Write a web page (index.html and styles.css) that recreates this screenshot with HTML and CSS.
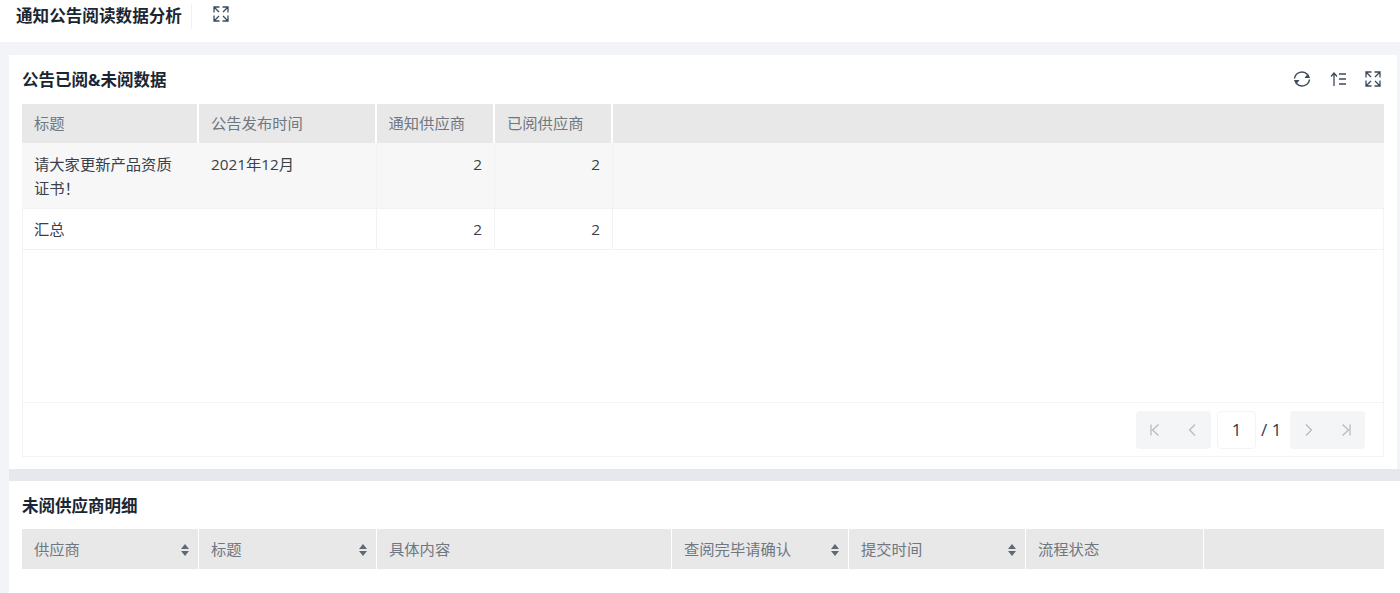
FILE: index.html
```html
<!DOCTYPE html>
<html lang="zh-CN">
<head>
<meta charset="utf-8">
<title>通知公告阅读数据分析</title>
<link rel="stylesheet" href="styles.css">
</head>
<body>
<header class="topbar">
  <h1 class="page-title">通知公告阅读数据分析</h1>
  <button class="icon-btn top-expand" aria-label="全屏">
    <svg viewBox="0 0 16 16" class="ico"><use href="#expand"/></svg>
  </button>
</header>

<svg width="0" height="0" class="defs">
  <symbol id="expand" viewBox="0 0 16 16">
    <path d="M1 6.500V1h5.500M9.500 1H15v5.500M1 9.500V15h5.500M15 9.500V15H9.500M1.500 1.500L6 6M14.500 1.500L10 6M1.500 14.500L6 10M14.500 14.500L10 10" fill="none" stroke="currentColor" stroke-width="1.300"/>
  </symbol>
</svg>

<main class="page">
  <section class="card card-first">
    <div class="card-head">
      <h2 class="card-title">公告已阅&amp;未阅数据</h2>
      <div class="tools">
        <button class="icon-btn" aria-label="刷新">
          <svg viewBox="0 0 18 18" class="ico-lg"><path d="M1.500 8.500A7.500 7.500 0 0 1 14.500 4.500M16.500 9.500A7.500 7.500 0 0 1 3.500 13.500" fill="none" stroke="currentColor" stroke-width="1.500"/><path d="M17 8h-5.500L15 3.500zM1 10h5.500L3 14.500z" fill="currentColor"/></svg>
        </button>
        <button class="icon-btn" aria-label="排序">
          <svg viewBox="0 0 16 16" class="ico"><path d="M4 15V2.500M1 5.500L4 2l3 3.500M9 3h7M9 8h7M9 13h7" fill="none" stroke="currentColor" stroke-width="1.300"/></svg>
        </button>
        <button class="icon-btn" aria-label="全屏">
          <svg viewBox="0 0 16 16" class="ico"><use href="#expand"/></svg>
        </button>
      </div>
    </div>

    <div class="table-frame">
      <div class="thead cols-a">
        <div class="th">标题</div>
        <div class="th">公告发布时间</div>
        <div class="th">通知供应商</div>
        <div class="th">已阅供应商</div>
        <div class="th"></div>
      </div>
      <div class="tbody">
        <div class="row row-tall">
          <div class="td td-title">请大家更新产品资质证书！</div>
          <div class="td">2021年12月</div>
          <div class="td num">2</div>
          <div class="td num">2</div>
          <div class="td"></div>
        </div>
        <div class="row row-total">
          <div class="td td-title">汇总</div>
          <div class="td"></div>
          <div class="td num">2</div>
          <div class="td num">2</div>
          <div class="td"></div>
        </div>
      </div>
      <div class="pager">
        <div class="pager-group">
          <span class="pager-arrow"><svg viewBox="0 0 12 14" class="pg-ico"><path d="M2 1.500v11M9.500 1.500L3.500 7l6 5.500" fill="none" stroke="currentColor" stroke-width="1.200"/></svg></span>
          <span class="pager-arrow"><svg viewBox="0 0 12 14" class="pg-ico"><path d="M9 1.500L3.500 7 9 12.500" fill="none" stroke="currentColor" stroke-width="1.200"/></svg></span>
        </div>
        <span class="pager-input">1</span>
        <span class="pager-total">/ 1</span>
        <div class="pager-group">
          <span class="pager-arrow"><svg viewBox="0 0 12 14" class="pg-ico"><path d="M3 1.500L8.500 7 3 12.500" fill="none" stroke="currentColor" stroke-width="1.200"/></svg></span>
          <span class="pager-arrow"><svg viewBox="0 0 12 14" class="pg-ico"><path d="M10 1.500v11M2.500 1.500L8.500 7l-6 5.500" fill="none" stroke="currentColor" stroke-width="1.200"/></svg></span>
        </div>
      </div>
    </div>
  </section>

  <section class="card card-second">
    <div class="card-head card-head-b">
      <h2 class="card-title">未阅供应商明细</h2>
    </div>
    <div class="thead cols-b">
      <div class="th sortable">供应商<svg class="sort" viewBox="0 0 8 12"><path d="M4 0l4 5H0zM4 12l4-5H0z" fill="currentColor"/></svg></div>
      <div class="th sortable">标题<svg class="sort" viewBox="0 0 8 12"><path d="M4 0l4 5H0zM4 12l4-5H0z" fill="currentColor"/></svg></div>
      <div class="th">具体内容</div>
      <div class="th sortable">查阅完毕请确认<svg class="sort" viewBox="0 0 8 12"><path d="M4 0l4 5H0zM4 12l4-5H0z" fill="currentColor"/></svg></div>
      <div class="th sortable">提交时间<svg class="sort" viewBox="0 0 8 12"><path d="M4 0l4 5H0zM4 12l4-5H0z" fill="currentColor"/></svg></div>
      <div class="th">流程状态</div>
      <div class="th"></div>
    </div>
  </section>
</main>
</body>
</html>
```
FILE: styles.css
```css
* { box-sizing: border-box; }
html, body { height: 593px; overflow: hidden; }
body {
  margin: 0;
  background: #f3f4f8;
  color: #333a45;
  font-family: "Open Sans", "Noto Sans CJK SC", sans-serif;
  font-size: 15.300px;
}
.defs { position: absolute; }
.topbar {
  height: 43px;
  background: #fff;
  display: flex;
  align-items: flex-start;
  padding: 4px 0 0 16px;
  border-bottom: 1px solid #f3f3f5;
}
.page-title {
  margin: 0;
  height: 25px;
  line-height: 24px;
  padding-right: 9px;
  font-size: 16.600px;
  font-weight: 700;
  color: #1a2632;
  border-right: 1px solid #eef0f2;
}
.icon-btn {
  border: 0;
  padding: 0;
  background: none;
  display: flex;
  color: #3b4a5a;
}
.top-expand { margin: 2px 0 0 21px; }
.ico { width: 16px; height: 16px; }
.ico-lg { width: 18px; height: 18px; }
.page { padding: 12px 3px 0 9px; }
.card {
  background: #fff;
  padding: 0 13px;
}
.card-first { height: 414px; }
.card-second {
  height: 112px;
  margin: 12px -3px 0 0;
  padding-right: 16px;
  box-shadow: 0 -12px 0 #e7e7ee;
}
.card-head {
  height: 49px;
  display: flex;
  align-items: center;
  justify-content: space-between;
  padding-bottom: 1px;
}
.card-head-b { height: 48px; }
.card-title {
  margin: 0;
  font-size: 16.500px;
  font-weight: 700;
  color: #1a2632;
}
.tools {
  display: flex;
  align-items: center;
  gap: 19px;
  padding-right: 3px;
}
.table-frame {
  height: 353px;
  border: 1px solid #f3f4f5;
  border-top: 0;
  display: flex;
  flex-direction: column;
}
.thead {
  height: 39px;
  flex: none;
  display: grid;
  gap: 0 2px;
}
.table-frame .thead { margin: 0 -1px; }
.cols-a { grid-template-columns: 175px 175.500px 116.500px 116px 1fr; }
.cols-b { grid-template-columns: 176px 177px 294px 176px 176px 177px 1fr; gap: 0 1px; }
.th {
  background: #e8e8e9;
  color: #6f7780;
  font-size: 15.300px;
  line-height: 39px;
  padding: 0 12px;
  display: flex;
  align-items: center;
  justify-content: space-between;
}
.cols-b .th { padding-top: 1px; }
.sort { width: 8px; height: 12px; color: #5c6a78; margin-right: -3px; }
.tbody { height: 260px; flex: none; border-bottom: 1px solid #f3f4f5; }
.row {
  display: grid;
  grid-template-columns: 177px 177.500px 118.500px 118px 1fr;
  border-bottom: 1px solid #f1f2f3;
  margin: 0 -1px;
}
.row-tall { height: 66px; background: #f7f7f8; }
.row-total { height: 41px; }
.row .td:nth-child(2),
.row .td:nth-child(3),
.row .td:nth-child(4) { border-right: 1px solid #f1f2f3; }
.td {
  padding: 9px 12px 0;
  line-height: 24px;
  color: #3a404a;
  font-size: 15.300px;
}
.td-title { padding-right: 24px; }
.row-total .td { padding-top: 8px; }
.num { text-align: right; }
.pager {
  flex: 1;
  display: flex;
  justify-content: flex-end;
  align-items: center;
  padding-right: 18px;
}
.pager-group {
  display: flex;
  width: 75px;
  height: 38px;
  background: #f3f5f6;
  border-radius: 4px;
}
.pager-arrow {
  flex: 1;
  display: flex;
  align-items: center;
  justify-content: center;
  color: #b4b9be;
}
.pg-ico { width: 12px; height: 14px; }
.pager-input {
  width: 39px;
  height: 38px;
  margin-left: 6px;
  border: 1px solid #f3f4f5;
  border-radius: 4px;
  text-align: center;
  line-height: 36px;
  font-size: 17px;
  color: #333a45;
}
.pager-total {
  width: 34px;
  padding-left: 5px;
  font-size: 17px;
  color: #333a45;
}
```
